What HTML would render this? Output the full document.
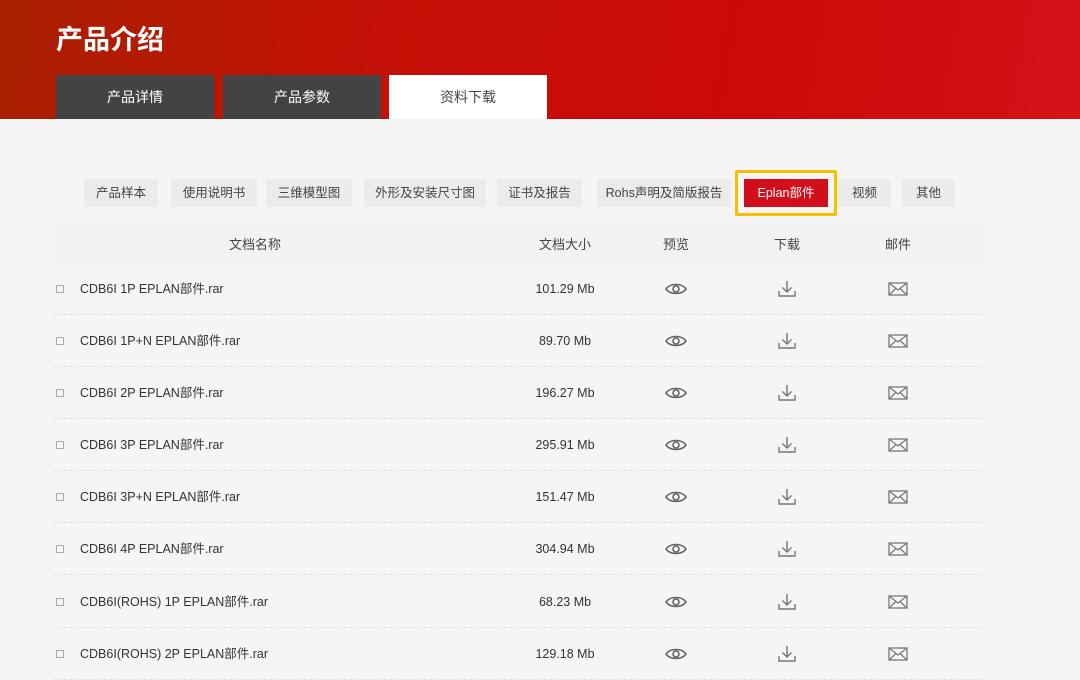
<!DOCTYPE html>
<html><head><meta charset="utf-8"><style>
*{margin:0;padding:0;box-sizing:border-box}
body{width:1080px;height:676px;overflow:hidden;background:#f5f5f5;font-family:"Liberation Sans","Noto Sans CJK SC",sans-serif;position:relative}
.hd{position:absolute;left:0;top:0;width:1080px;height:119px;background:linear-gradient(100deg,#a82000 0%,#c41006 35%,#cc0a08 70%,#d41218 100%)}
.hd h1{position:absolute;left:56px;top:18px;color:#fff;font-size:27px;font-weight:bold}
.tab{position:absolute;top:75px;height:44px;width:158px;background:#434343;color:#fff;font-size:14px;text-align:center;line-height:44px}
.tab.on{background:#fff;color:#444}
.f{position:absolute;top:179px;height:28px;background:#ebebeb;color:#444;font-size:12.5px;text-align:center;line-height:28px}
.f.on{background:#d10f1b;color:#fff}
.yb{position:absolute;left:735px;top:170px;width:102px;height:46px;border:3px solid #f6c000;border-radius:2px}
.th{position:absolute;left:54px;top:222px;width:930px;height:41px;background:#f2f2f2}
.t{position:absolute;font-size:13px;color:#444;transform:translateX(-50%);white-space:nowrap}
.row{position:absolute;left:54px;width:928px;height:52px;border-bottom:1px dashed #ddd}
.nm{position:absolute;left:26px;top:17px;font-size:12.5px;color:#333;line-height:18px;height:18px}
.bx{position:absolute;left:2px;top:22px;width:8px;height:8px;border:1px solid #aaa}
.sz{position:absolute;left:511px;top:17px;font-size:12.5px;color:#333;transform:translateX(-50%);line-height:18px;height:18px}
.ic{position:absolute;top:16px}
</style></head><body>
<div class="hd"><h1>产品介绍</h1></div>
<div class="tab" style="left:56px">产品详情</div>
<div class="tab" style="left:223px">产品参数</div>
<div class="tab on" style="left:389px">资料下载</div>

<div class="f" style="left:84px;width:74px">产品样本</div>
<div class="f" style="left:171px;width:86px">使用说明书</div>
<div class="f" style="left:266px;width:86px">三维模型图</div>
<div class="f" style="left:364px;width:122px">外形及安装尺寸图</div>
<div class="f" style="left:497px;width:85px">证书及报告</div>
<div class="f" style="left:597px;width:134px">Rohs声明及简版报告</div>
<div class="f on" style="left:744px;width:84px">Eplan部件</div>
<div class="f" style="left:838px;width:53px">视频</div>
<div class="f" style="left:902px;width:53px">其他</div>
<div class="yb"></div>

<div class="th">
<span class="t" style="left:201px;top:12px">文档名称</span>
<span class="t" style="left:511px;top:12px">文档大小</span>
<span class="t" style="left:622px;top:12px">预览</span>
<span class="t" style="left:733px;top:12px">下载</span>
<span class="t" style="left:844px;top:12px">邮件</span>
</div>

<div id="rows"></div>
<script>
var d=[["CDB6I 1P EPLAN部件.rar","101.29 Mb"],["CDB6I 1P+N EPLAN部件.rar","89.70 Mb"],["CDB6I 2P EPLAN部件.rar","196.27 Mb"],["CDB6I 3P EPLAN部件.rar","295.91 Mb"],["CDB6I 3P+N EPLAN部件.rar","151.47 Mb"],["CDB6I 4P EPLAN部件.rar","304.94 Mb"],["CDB6I(ROHS) 1P EPLAN部件.rar","68.23 Mb"],["CDB6I(ROHS) 2P EPLAN部件.rar","129.18 Mb"]];
var h="";
var tops=[263,315,367,419,471,523,576,628];
d.forEach(function(r,i){
h+='<div class="row" style="top:'+tops[i]+'px"><div class="bx"></div><div class="nm">'+r[0]+'</div><div class="sz">'+r[1]+'</div>'+
'<svg class="ic" style="left:610px" width="24" height="20" viewBox="0 0 24 20"><path d="M2 10C6 4 18 4 22 10C18 16 6 16 2 10Z" fill="none" stroke="#666" stroke-width="1.6"/><circle cx="12" cy="10" r="3" fill="none" stroke="#666" stroke-width="1.6"/></svg>'+
'<svg class="ic" style="left:723px" width="20" height="20" viewBox="0 0 20 20"><path d="M10 2V13M5.5 8.5L10 13L14.5 8.5M2 12V17H18V12" fill="none" stroke="#777" stroke-width="1.4"/></svg>'+
'<svg class="ic" style="left:833px" width="22" height="20" viewBox="0 0 22 20"><rect x="2" y="4" width="18" height="12" fill="none" stroke="#777" stroke-width="1.3"/><path d="M2 4L11 11L20 4M2 16L9 9.5M20 16L13 9.5" fill="none" stroke="#777" stroke-width="1.2"/></svg></div>';
});
document.getElementById("rows").innerHTML=h;
</script>
</body></html>
